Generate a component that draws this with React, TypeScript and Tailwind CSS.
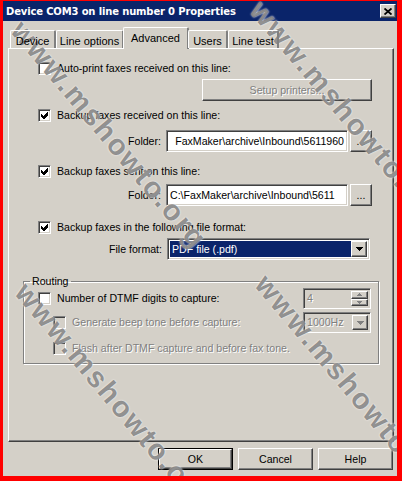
const raised =
  "border border-t-white border-l-white border-r-[#404040] border-b-[#404040] shadow-[inset_-1px_-1px_0_#808080]";
const sunken =
  "border border-t-[#808080] border-l-[#808080] border-r-white border-b-white shadow-[inset_1px_1px_0_#404040,inset_-1px_-1px_0_#d4d0c8]";
const dim = "text-[#808080] [text-shadow:1px_1px_0_#fff]";
const mark =
  "absolute -translate-x-1/2 -translate-y-1/2 rotate-[50deg] whitespace-nowrap text-[29px] font-bold leading-none tracking-[2px] text-[#6e6e6e]/75 [text-shadow:0_0_2px_#fff]";

function Check({ checked = false, disabled = false }: { checked?: boolean; disabled?: boolean }) {
  return (
    <span
      className={`flex h-[13px] w-[13px] shrink-0 items-center justify-center ${sunken} ${
        disabled ? "bg-[#d4d0c8]" : "bg-white"
      }`}
    >
      {checked && (
        <svg width="7" height="7" viewBox="0 0 7 7" shapeRendering="crispEdges">
          <polygon points="0,2 2,4 6,0 7,0 7,3 3,7 2,7 0,5" fill="#000" />
        </svg>
      )}
    </span>
  );
}

function CheckRow({
  label,
  checked,
  disabled,
}: {
  label: string;
  checked?: boolean;
  disabled?: boolean;
}) {
  return (
    <div className="flex h-[13px] items-center gap-[6px]">
      <Check checked={checked} disabled={disabled} />
      <span className={`whitespace-nowrap ${disabled ? dim : ""}`}>{label}</span>
    </div>
  );
}

function Arrow({ color = "#000" }: { color?: string }) {
  return (
    <svg width="7" height="4" viewBox="0 0 7 4" shapeRendering="crispEdges">
      <polygon points="0,0 7,0 3.5,4" fill={color} />
    </svg>
  );
}

function FolderRow({ value, alignEnd }: { value: string; alignEnd?: boolean }) {
  return (
    <div className="mr-[7px] flex h-[22px] items-center justify-end">
      <span className="mr-[5px]">Folder:</span>
      <div
        className={`flex h-[22px] w-[182px] items-center overflow-hidden bg-white px-[3px] ${sunken} ${
          alignEnd ? "justify-end" : ""
        }`}
      >
        <span className="whitespace-nowrap">{value}</span>
      </div>
      <button className={`ml-[2px] flex h-[22px] w-[22px] items-end justify-center bg-[#d4d0c8] pb-[4px] leading-none ${raised}`}>
        ...
      </button>
    </div>
  );
}

const tabs = [
  { label: "Device", w: "w-[46px]" },
  { label: "Line options", w: "w-[68px]" },
  { label: "Advanced", w: "w-[66px]", active: true },
  { label: "Users", w: "w-[40px]" },
  { label: "Line test", w: "w-[51px]" },
];

export default function App() {
  return (
    <div className="relative h-[481px] w-[402px] overflow-hidden border-t-[1px] border-r-[5px] border-b-[5px] border-l-[3px] border-[#ff0000] bg-[#d4d0c8] text-[10.6px] leading-[13px] text-black [font-family:'Liberation_Sans',Arial,sans-serif]">
      {/* Title bar */}
      <div className="flex h-[20px] items-center justify-between bg-[#0a246a] pl-[3px] pr-[1px]">
        <span className="text-[10px] font-bold tracking-[-0.15px] text-white [font-family:'DejaVu_Sans',sans-serif]">
          Device COM3 on line number 0 Properties
        </span>
        <button className={`flex h-[14px] w-[16px] items-center justify-center bg-[#d4d0c8] ${raised}`}>
          <svg width="8" height="7" viewBox="0 0 8 7">
            <path d="M0.5 0.5 L7.5 6.5 M7.5 0.5 L0.5 6.5" stroke="#000" strokeWidth="1.8" />
          </svg>
        </button>
      </div>

      {/* Body */}
      <div className="flex flex-col pl-[5px] pr-[3px] pt-[7px]">
        {/* Tabs */}
        <div className="relative z-10 flex h-[20px] items-end pl-[2px] text-[11px]">
          {tabs.map((t) =>
            t.active ? (
              <div
                key={t.label}
                className={`-mx-[1px] -mb-[1px] flex h-[22px] ${t.w} items-start justify-center rounded-t-[2px] border-l border-t border-r-2 border-l-white border-t-white border-r-[#808080] bg-[#d4d0c8] pt-[4px]`}
              >
                {t.label}
              </div>
            ) : (
              <div
                key={t.label}
                className={`flex h-[18px] ${t.w} items-start justify-center rounded-t-[2px] border-l border-t border-r-2 border-l-white border-t-white border-r-[#808080] pt-[4px]`}
              >
                {t.label}
              </div>
            )
          )}
        </div>

        {/* Tab panel */}
        <div className="flex h-[394px] flex-col border border-t-white border-l-white border-r-[#404040] border-b-[#404040] px-[14px] pt-[13px] shadow-[inset_-1px_-1px_0_#808080]">
          <div className="ml-[15px]">
            <CheckRow label="Auto-print faxes received on this line:" />
          </div>
          <div className="mr-[7px] mt-[4px] flex justify-end">
            <button className={`flex h-[22px] w-[170px] items-center justify-center bg-[#d4d0c8] ${raised} ${dim}`}>
              Setup printers...
            </button>
          </div>
          <div className="ml-[15px] mt-[8px]">
            <CheckRow label="Backup faxes received on this line:" checked />
          </div>
          <div className="mt-[8px]">
            <FolderRow value="FaxMaker\archive\Inbound\5611960" alignEnd />
          </div>
          <div className="ml-[15px] mt-[13px]">
            <CheckRow label="Backup faxes sent on this line:" checked />
          </div>
          <div className="mt-[6px]">
            <FolderRow value="C:\FaxMaker\archive\Inbound\5611" />
          </div>
          <div className="ml-[15px] mt-[15px]">
            <CheckRow label="Backup faxes in the following file format:" checked />
          </div>
          <div className="mr-[9px] mt-[4px] flex h-[22px] items-center justify-end">
            <span className="mr-[5px]">File format:</span>
            <div className={`flex h-[22px] w-[203px] items-center bg-white p-[2px] ${sunken}`}>
              <div className="flex h-full flex-1 items-center bg-[#0a246a] pl-[2px] text-white">PDF file (.pdf)</div>
              <div className={`flex h-full w-[16px] items-center justify-center bg-[#d4d0c8] ${raised}`}>
                <Arrow />
              </div>
            </div>
          </div>

          {/* Routing group */}
          <fieldset className="mt-[15px] border border-[#808080] pb-[8px] shadow-[inset_1px_1px_0_#fff,1px_1px_0_#fff]">
            <legend className="ml-[6px] px-[2px] leading-[13px]">Routing</legend>
            <div className="flex flex-col pl-[14px] pr-[7px]">
              <div className="flex h-[21px] items-center justify-between">
                <CheckRow label="Number of DTMF digits to capture:" />
                <div className={`flex h-[21px] w-[68px] items-stretch bg-[#d4d0c8] p-[2px] ${sunken}`}>
                  <span className={`flex-1 pl-[1px] leading-[15px] ${dim}`}>4</span>
                  <div className="flex w-[17px] flex-col">
                    <div className={`flex flex-1 items-center justify-center ${raised}`}>
                      <svg width="5" height="3" viewBox="0 0 5 3" shapeRendering="crispEdges">
                        <polygon points="2.5,0 5,3 0,3" fill="#808080" />
                      </svg>
                    </div>
                    <div className={`flex flex-1 items-center justify-center ${raised}`}>
                      <svg width="5" height="3" viewBox="0 0 5 3" shapeRendering="crispEdges">
                        <polygon points="0,0 5,0 2.5,3" fill="#808080" />
                      </svg>
                    </div>
                  </div>
                </div>
              </div>
              <div className="mt-[3px] flex h-[21px] items-center justify-between">
                <div className="ml-[15px]">
                  <CheckRow label="Generate beep tone before capture:" disabled />
                </div>
                <div className={`flex h-[21px] w-[68px] items-center bg-[#d4d0c8] p-[2px] ${sunken}`}>
                  <span className={`flex-1 pl-[1px] ${dim}`}>1000Hz</span>
                  <div className={`flex h-full w-[16px] items-center justify-center ${raised}`}>
                    <Arrow color="#808080" />
                  </div>
                </div>
              </div>
              <div className="ml-[15px] mt-[9px]">
                <CheckRow label="Flash after DTMF capture and before fax tone." disabled />
              </div>
            </div>
          </fieldset>
        </div>

        {/* Buttons */}
        <div className="mt-[6px] flex justify-end gap-[5px] pr-[1px]">
          <div className="border border-black">
            <button className={`flex h-[20px] w-[73px] items-center justify-center bg-[#d4d0c8] ${raised}`}>OK</button>
          </div>
          <button className={`flex h-[22px] w-[75px] items-center justify-center bg-[#d4d0c8] ${raised}`}>Cancel</button>
          <button className={`flex h-[22px] w-[75px] items-center justify-center bg-[#d4d0c8] ${raised}`}>Help</button>
        </div>
      </div>

      {/* Watermark */}
      <div className="pointer-events-none absolute inset-0 overflow-hidden [font-family:'Liberation_Sans',Arial,sans-serif]">
        <span className={`${mark} left-[106px] top-[134px]`}>www.mshowto.org</span>
        <span className={`${mark} left-[110px] top-[396px]`}>www.mshowto.org</span>
        <span className={`${mark} left-[345px] top-[114px]`}>www.mshowto.org</span>
        <span className={`${mark} left-[350px] top-[388px]`}>www.mshowto.org</span>
      </div>
    </div>
  );
}
